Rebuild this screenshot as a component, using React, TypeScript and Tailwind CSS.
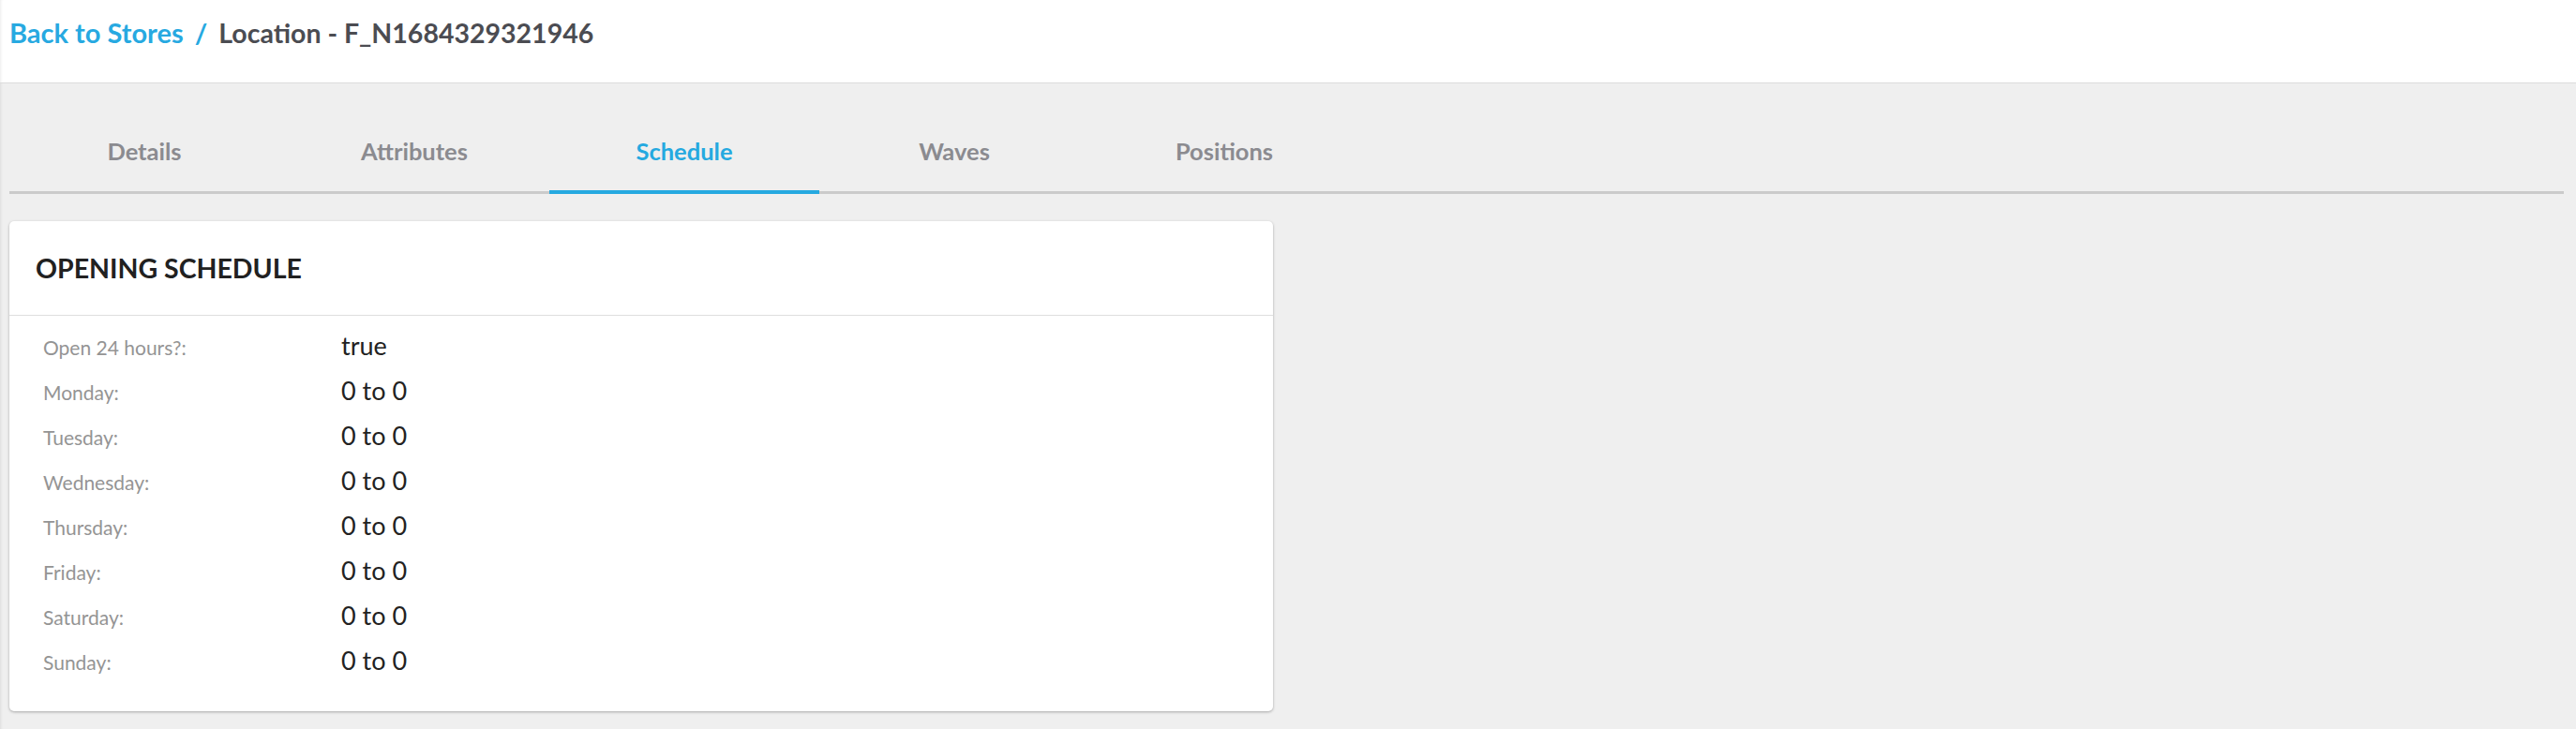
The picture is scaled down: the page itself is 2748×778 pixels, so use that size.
const tabs = ["Details", "Attributes", "Schedule", "Waves", "Positions"];

const schedule = [
  { label: "Open 24 hours?:", value: "true" },
  { label: "Monday:", value: "0 to 0" },
  { label: "Tuesday:", value: "0 to 0" },
  { label: "Wednesday:", value: "0 to 0" },
  { label: "Thursday:", value: "0 to 0" },
  { label: "Friday:", value: "0 to 0" },
  { label: "Saturday:", value: "0 to 0" },
  { label: "Sunday:", value: "0 to 0" },
];

export default function App() {
  const activeTab = "Schedule";

  return (
    <div
      className="min-h-[778px] w-full bg-[#efefef] shadow-[inset_3px_0_3px_-2px_rgba(0,0,0,0.08)]"
      style={{ fontFamily: "Lato, 'Noto Sans', sans-serif" }}
    >
      {/* Breadcrumb header */}
      <div className="h-[89px] bg-white border-b border-[#dcdcdc] pl-[10px] pt-[18px] shadow-[inset_3px_0_3px_-2px_rgba(0,0,0,0.08)]">
        <div className="flex items-baseline text-[29px] leading-[1.2] font-bold">
          <a href="#" className="text-[#27a9e1]">
            Back to Stores
          </a>
          <span className="text-[#27a9e1] mx-[12px]">/</span>
          <span className="text-[28.5px] text-[#4b4c52]">
            Location - F_N1684329321946
          </span>
        </div>
      </div>

      <div className="px-[10px] pr-[13px]">
        {/* Tabs */}
        <div className="mt-[31px] flex border-b-[3px] border-[#cbcbcb]">
          {tabs.map((t) => (
            <button
              key={t}
              className={
                "w-[288px] h-[87px] -mb-[3px] flex items-center justify-center border-b-4 text-[25.5px] leading-[1.2] font-bold " +
                (t === activeTab
                  ? "border-[#25a9e0] text-[#25a9e0]"
                  : "border-transparent text-[#8b8b90]")
              }
            >
              {t}
            </button>
          ))}
        </div>

        {/* Opening schedule card */}
        <div className="mt-[29px] w-[1348px] bg-white rounded-[5px] shadow-[0_1px_3px_rgba(0,0,0,0.3)]">
          <div className="h-[101px] flex items-center px-[28px] border-b border-[#dedede]">
            <h2 className="text-[28.5px] leading-[1.2] font-bold text-[#212121]">
              OPENING SCHEDULE
            </h2>
          </div>
          <div className="pt-[8px] pb-[30px] px-[36px]">
            {schedule.map((row) => (
              <div key={row.label} className="flex items-baseline h-[48px]">
                <span className="w-[318px] text-[21px] leading-none text-[#949494]">
                  {row.label}
                </span>
                <span className="text-[27px] leading-[48px] text-[#222222]">
                  {row.value}
                </span>
              </div>
            ))}
          </div>
        </div>
      </div>
    </div>
  );
}
